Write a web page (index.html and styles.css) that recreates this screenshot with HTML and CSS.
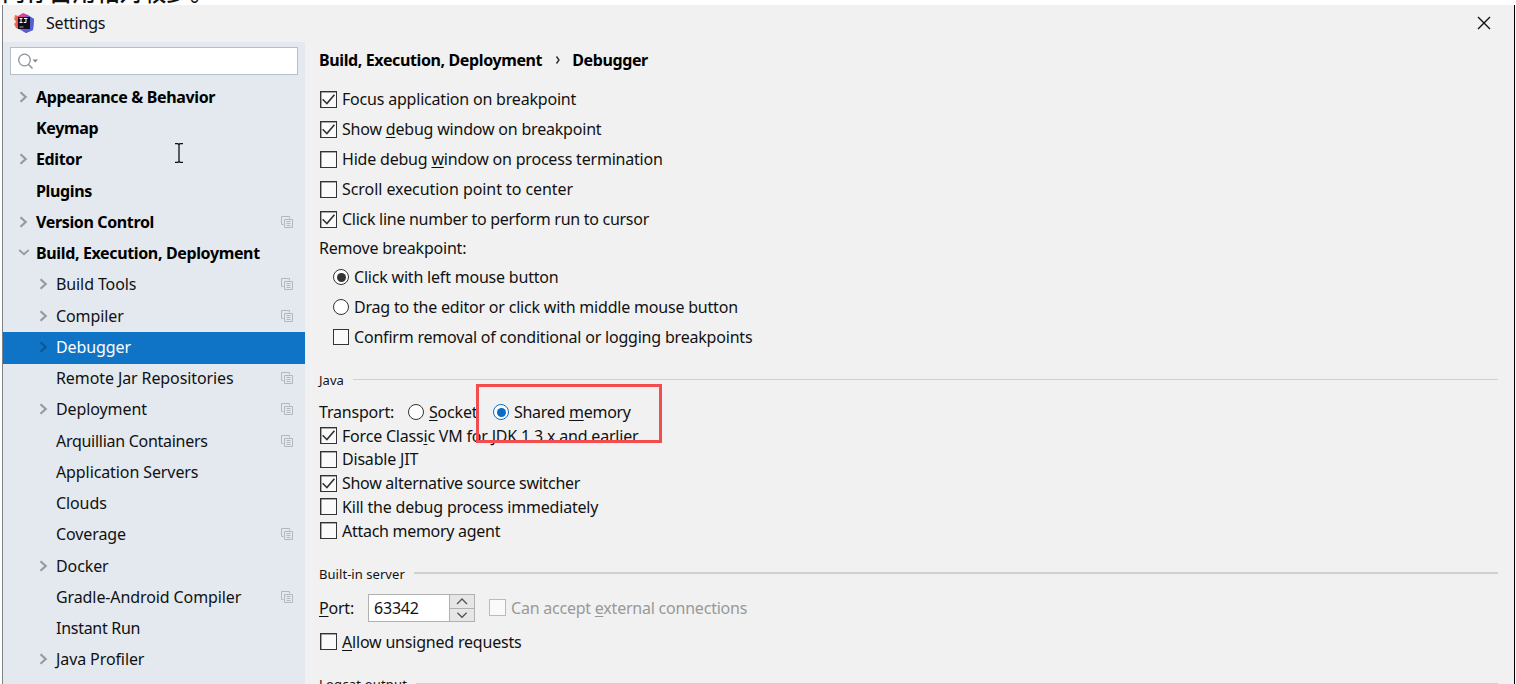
FILE: index.html
```html
<!DOCTYPE html>
<html lang="en">
<head>
<meta charset="utf-8">
<title>Settings</title>
<link rel="stylesheet" href="styles.css">
</head>
<body>
<svg class="defs" width="0" height="0" aria-hidden="true">
  <symbol id="right" viewBox="0 0 12 12"><path d="M3.5 1.2 8.7 6 3.5 10.8" fill="none" stroke="currentColor" stroke-width="2.2"/></symbol>
  <symbol id="down" viewBox="0 0 12 12"><path d="M2.2 3 7 7.2 11.8 3" fill="none" stroke="currentColor" stroke-width="1.8"/></symbol>
  <symbol id="copy" viewBox="0 0 12 12"><path d="M2.5 8.5h-2v-8h8v2M3.5 3.5h8v8h-8zM5.5 5.5h4M5.5 7.5h4M5.5 9.5h4" fill="none" stroke="currentColor"/></symbol>
  <symbol id="check" viewBox="0 0 14 14"><path d="M1.500 6.800 5.500 10.700 12.500 2.500" fill="none" stroke="#333" stroke-width="1.500"/></symbol>
</svg>
<p class="caption">内存占用相对较少。</p>
<div class="window">
  <header class="titlebar">
    <svg class="logo" width="20" height="20" viewBox="0 0 20 20">
      <defs><linearGradient id="g" x1="0" x2="1" y1="0" y2="0"><stop offset="0" stop-color="#f5803c"/><stop offset=".2" stop-color="#ef4a62"/><stop offset=".5" stop-color="#d8459c"/><stop offset=".75" stop-color="#5b5cdc"/><stop offset="1" stop-color="#4a5ed8"/></linearGradient></defs>
      <path d="M1 2 4 3 9 0 14 2 20 6 19 17 12 20 7 17 2 15 0 11 2 9 0 6z" fill="url(#g)"/>
      <path d="M14 3 20 6 19 17 12 20 7 17 16 16z" fill="#5460d4"/>
      <path d="M4 4h12v12H4z" fill="#120b18"/>
      <path d="M5.500 5.500h3M7 5.500v4M5.500 9.500h3M10 5.500h3.500M12 5.500v4H9.700" stroke="#fff" fill="none"/>
      <path d="M5.500 14h4" stroke="#aaa"/>
    </svg>
    <span class="title">Settings</span>
    <svg class="close" width="14" height="14" viewBox="0 0 14 14"><path d="M1 1 13 13M13 1 1 13" stroke="#111" stroke-width="1.400"/></svg>
  </header>
  <div class="body">
    <aside class="sidebar">
      <div class="search"><svg width="24" height="18" viewBox="0 0 24 18"><circle cx="7.500" cy="8" r="5.800" fill="none" stroke="#8b949d" stroke-width="1.300"/><path d="M11.500 12.500 15.500 16.500" stroke="#8b949d" stroke-width="1.600"/><path d="M15.500 7.500h5.500l-2.750 3z" fill="#7e8790"/></svg></div>
      <nav class="tree">
        <div class="row top"><svg class="arrow"><use href="#right"/></svg><span>Appearance &amp; Behavior</span></div>
        <div class="row top"><i class="arrow"></i><span>Keymap</span></div>
        <div class="row top"><svg class="arrow"><use href="#right"/></svg><span>Editor</span></div>
        <div class="row top"><i class="arrow"></i><span>Plugins</span></div>
        <div class="row top"><svg class="arrow"><use href="#right"/></svg><span>Version Control</span><svg class="copy"><use href="#copy"/></svg></div>
        <div class="row top"><svg class="arrow"><use href="#down"/></svg><span>Build, Execution, Deployment</span></div>
        <div class="row"><svg class="arrow"><use href="#right"/></svg><span>Build Tools</span><svg class="copy"><use href="#copy"/></svg></div>
        <div class="row"><svg class="arrow"><use href="#right"/></svg><span>Compiler</span><svg class="copy"><use href="#copy"/></svg></div>
        <div class="row selected"><svg class="arrow"><use href="#right"/></svg><span>Debugger</span></div>
        <div class="row"><i class="arrow"></i><span>Remote Jar Repositories</span><svg class="copy"><use href="#copy"/></svg></div>
        <div class="row"><svg class="arrow"><use href="#right"/></svg><span>Deployment</span><svg class="copy"><use href="#copy"/></svg></div>
        <div class="row"><i class="arrow"></i><span class="narrow">Arquillian Containers</span><svg class="copy"><use href="#copy"/></svg></div>
        <div class="row"><i class="arrow"></i><span>Application Servers</span></div>
        <div class="row"><i class="arrow"></i><span>Clouds</span></div>
        <div class="row"><i class="arrow"></i><span>Coverage</span><svg class="copy"><use href="#copy"/></svg></div>
        <div class="row"><svg class="arrow"><use href="#right"/></svg><span>Docker</span></div>
        <div class="row"><i class="arrow"></i><span>Gradle-Android Compiler</span><svg class="copy"><use href="#copy"/></svg></div>
        <div class="row"><i class="arrow"></i><span class="narrow">Instant Run</span></div>
        <div class="row"><svg class="arrow"><use href="#right"/></svg><span>Java Profiler</span></div>
      </nav>
    </aside>
    <main class="content">
      <h1 class="crumbs"><span>Build, Execution, Deployment</span><svg width="6" height="10" viewBox="0 0 6 10"><path d="M1.500 1.500 4 5 1.500 8.500" fill="none" stroke="#222" stroke-width="1.300"/></svg><span>Debugger</span></h1>
      <div class="group general">
        <div class="opt"><svg class="box"><use href="#check"/></svg><span>Focus application on breakpoint</span></div>
        <div class="opt"><svg class="box"><use href="#check"/></svg><span>Show <u>d</u>ebug window on breakpoint</span></div>
        <div class="opt"><i class="box"></i><span>Hide debug <u>w</u>indow on process termination</span></div>
        <div class="opt"><i class="box"></i><span class="wide">Scroll execution point to center</span></div>
        <div class="opt"><svg class="box"><use href="#check"/></svg><span class="narrow">Click line number to perform run to cursor</span></div>
      </div>
      <div class="label">Remove breakpoint:</div>
      <div class="group indent">
        <div class="opt"><i class="radio on"></i><span>Click with left mouse button</span></div>
        <div class="opt"><i class="radio"></i><span>Drag to the editor or click with middle mouse button</span></div>
        <div class="opt"><i class="box thin"></i><span>Confirm removal of conditional or logging breakpoints</span></div>
      </div>
      <h2 class="section java"><span>Java</span></h2>
      <div class="transport">
        <span class="lead">Transport:</span>
        <div class="opt socket"><i class="radio"></i><span><u>S</u>ocket</span></div>
        <div class="opt"><i class="radio blue"></i><span class="narrow">Shared <u>m</u>emory</span></div>
        <div class="highlight"></div>
      </div>
      <div class="group tight">
        <div class="opt"><svg class="box"><use href="#check"/></svg><span>Force Class<u>i</u>c VM for JDK 1.3.x and earlier</span></div>
        <div class="opt"><i class="box"></i><span>Disable JIT</span></div>
        <div class="opt"><svg class="box"><use href="#check"/></svg><span class="narrow">Show alternative source switcher</span></div>
        <div class="opt"><i class="box"></i><span>Kill the debug process immediately</span></div>
        <div class="opt"><i class="box"></i><span class="narrow">Attach memory agent</span></div>
      </div>
      <h2 class="section server"><span>Built-in server</span></h2>
      <div class="port">
        <span class="lead"><u>P</u>ort:</span>
        <div class="spinner"><span>63342</span><div class="steps"><svg viewBox="0 0 24 13"><path d="M7 9 12 4 17 9" fill="none" stroke="#555" stroke-width="1.400"/></svg><svg viewBox="0 0 24 13"><path d="M7 4 12 9 17 4" fill="none" stroke="#555" stroke-width="1.400"/></svg></div></div>
        <div class="opt disabled"><i class="box"></i><span>Can accept <u>e</u>xternal connections</span></div>
      </div>
      <div class="opt unsigned"><i class="box"></i><span><u>A</u>llow unsigned requests</span></div>
      <h2 class="section logcat"><span>Logcat output</span></h2>
    </main>
  </div>
</div>
<svg class="cursor" width="10" height="20" viewBox="0 0 10 20"><path d="M1 .7h3l1 1 1-1h3M5 1.500v17M1 19.300h3l1-1 1 1h3" fill="none" stroke="#111" stroke-width="1.300"/></svg>
</body>
</html>
```
FILE: styles.css
```css
* { box-sizing: border-box; }
body { margin: 0; width: 1516px; height: 684px; overflow: hidden; position: relative; display: flex; flex-direction: column; background: #fff; color: #111; font: 16px/24px "Noto Sans", "Noto Sans CJK SC", sans-serif; letter-spacing: -.2px; }
.defs { position: absolute; }
.caption { margin: 0; height: 5px; flex: none; overflow: hidden; padding-left: 2px; font: 500 23.500px/28px "Noto Sans CJK SC", sans-serif; letter-spacing: 0; display: flex; align-items: flex-end; white-space: nowrap; }
.window { flex: none; height: 679px; margin-left: 2px; width: 1513px; border-left: 1px solid #7d8287; border-right: 1px solid #000; background: #f1f1f1; overflow: hidden; }
.titlebar { height: 37px; display: flex; align-items: center; padding: 0 23px 2px 11px; }
.title { margin-left: 12px; flex: 1; }
.body { display: flex; height: 642px; }
.sidebar { width: 302px; background: #e3e9ef; padding-top: 5px; flex: none; letter-spacing: -.1px; }
.search { width: 288px; height: 28px; margin-left: 7px; border: 1.500px solid #b3bfca; background: #fff; display: flex; align-items: center; padding-left: 6px; }
.tree { padding-top: 7px; }
.row { height: 31.25px; display: flex; align-items: center; padding: 0 12px 1.700px 34px; white-space: nowrap; }
.row.top { padding-left: 14px; font-weight: 700; color: #000; letter-spacing: -.36px; }
.arrow { width: 12px; height: 12px; flex: none; color: #969a9f; margin-right: 7px; }
.row span { flex: 1; }
.copy { width: 12px; height: 12px; color: #b2b8be; }
.row.selected { background: #1074c6; color: #fff; height: 32px; margin-bottom: -.75px; padding-bottom: 2px; }
.selected .arrow { color: #0b5797; }
.content { flex: 1; padding-left: 14px; padding-right: 16px; }
.crumbs { margin: 6px 0 12px; height: 24px; display: flex; align-items: center; font-size: 16px; color: #000; letter-spacing: -.38px; }
.crumbs svg { margin: 0 11px 0 13px; }
.narrow { letter-spacing: -.28px; }
.wide { letter-spacing: -.06px; }
.opt { display: flex; align-items: center; gap: 5px; height: 30px; white-space: nowrap; }
.box { width: 17px; height: 17px; flex: none; border: 1.500px solid #333; background: #fafafa; margin-left: 1px; box-shadow: inset .500px .500px 0 #555; }
.thin { border-width: 1px; margin-left: 0; width: 16px; height: 16px; box-shadow: none; }
.radio { width: 16px; height: 16px; flex: none; border: 1px solid #333; border-radius: 50%; background: #fff; display: grid; place-items: center; }
.on::after, .blue::after { content: ""; width: 9px; height: 9px; border-radius: 50%; background: #333; }
.blue { border-color: #0a6cc4; }
.blue::after { background: #0a6cc4; }
u { text-decoration: underline; text-underline-offset: 2px; text-decoration-thickness: 1px; }
.label { height: 28px; line-height: 28px; }
.indent { padding-left: 14px; }
.section { margin: 0; display: flex; align-items: center; gap: 9px; font-size: 13px; font-weight: 400; height: 20px; letter-spacing: .05px; }
.section::after { content: ""; flex: 1; height: 1px; background: #cfcfcf; }
.java { margin-top: 18px; }
.transport { position: relative; display: flex; align-items: center; height: 30px; margin-top: 7px; }
.transport .lead { width: 89px; }
.socket { width: 85px; }
.highlight { position: absolute; left: 157px; top: -13px; width: 186px; height: 59px; border: 3px solid #f44d50; }
.tight { margin-top: -3.300px; }
.tight .opt { height: 23.800px; }
.server { margin-top: 21.300px; }
.java::after { margin-bottom: 1px; }
.server::after { height: 2px; margin-bottom: 1px; }
.port { display: flex; align-items: center; margin-top: 9px; height: 30px; }
.port .lead { width: 49px; }
.spinner { width: 107px; height: 28px; border: 1px solid #b0b0b0; background: #fff; display: flex; margin-right: 13px; }
.spinner > span { flex: 1; padding-left: 5px; line-height: 26px; }
.steps { width: 25px; display: flex; flex-direction: column; background: #e6e6e6; border-left: 1px solid #b0b0b0; }
.steps svg { height: 13px; }
.steps svg + svg { border-top: 1px solid #b0b0b0; }
.disabled { color: #999; letter-spacing: -.22px; }
.disabled .box { border: 1px solid #bbb; box-shadow: none; }
.unsigned { margin-top: 4px; }
.logcat { margin-top: 17px; letter-spacing: .2px; }
.cursor { position: absolute; left: 174px; top: 143px; }
```
